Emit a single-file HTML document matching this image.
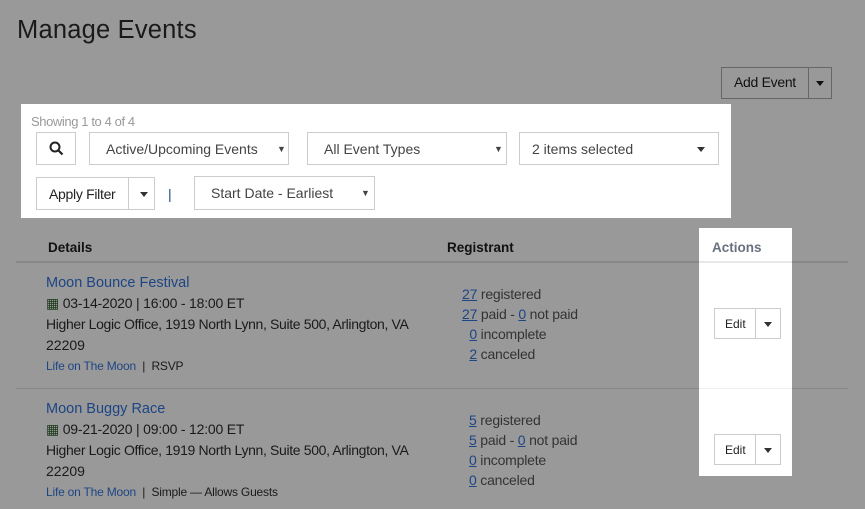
<!DOCTYPE html>
<html><head><style>
*{margin:0;padding:0;box-sizing:border-box}
body{width:865px;height:509px;background:#999;font-family:"Liberation Sans",sans-serif;position:relative;overflow:hidden;color:#1a1a1a}
.a{position:absolute;white-space:nowrap}
.w{background:#fff;position:absolute}
.box{position:absolute;border:1px solid #ccc;background:#fff;font-size:14px;color:#444}
.lnk{color:#1d4585}
.u{text-decoration:underline;color:#1d4585}
.tri{position:absolute;width:0;height:0;border-left:4px solid transparent;border-right:4px solid transparent;border-top:5px solid #333}
.sm{position:absolute;font-size:9px;top:11px}
</style></head><body>
<div class="a" style="left:17px;top:16px;font-size:25.5px;color:#1a1a1a;letter-spacing:0.2px">Manage Events</div>
<div class="a" style="left:721px;top:67px;width:111px;height:32px;border:1px solid #666;"></div>
<div class="a" style="left:734px;top:74px;font-size:14px;color:#111;letter-spacing:-0.3px">Add Event</div>
<div class="a" style="left:808px;top:67px;width:1px;height:32px;background:#666"></div>
<span class="tri" style="left:816px;top:81px;border-top-color:#111"></span>

<div class="w" style="left:21px;top:104px;width:710px;height:114px"></div>
<div class="a" style="left:31px;top:114px;font-size:13px;color:#999;letter-spacing:-0.4px">Showing 1 to 4 of 4</div>
<div class="box" style="left:36px;top:132px;width:40px;height:33px"><svg style="position:absolute;left:12px;top:8px" width="15" height="15" viewBox="0 0 15 15"><circle cx="6" cy="6" r="4.5" fill="none" stroke="#222" stroke-width="2"/><path d="M9.5 9.5L13.5 13.5" stroke="#222" stroke-width="2.2"/></svg></div>
<div class="box" style="left:89px;top:132px;width:200px;height:33px"><span class="a" style="left:16px;top:8px">Active/Upcoming Events</span><span class="sm" style="left:187px">▼</span></div>
<div class="box" style="left:307px;top:132px;width:200px;height:33px"><span class="a" style="left:16px;top:8px">All Event Types</span><span class="sm" style="left:186px">▼</span></div>
<div class="box" style="left:519px;top:132px;width:200px;height:33px"><span class="a" style="left:12px;top:8px">2 items selected</span><span class="tri" style="left:177px;top:14px"></span></div>
<div class="box" style="left:36px;top:177px;width:119px;height:33px"><span class="a" style="left:12px;top:8px;color:#222;letter-spacing:-0.3px">Apply Filter</span><span class="a" style="left:91px;top:-1px;width:1px;height:33px;background:#ccc"></span><span class="tri" style="left:103px;top:14px"></span></div>
<div class="a" style="left:168px;top:186px;font-size:14px;color:#1d4585">|</div>
<div class="box" style="left:194px;top:176px;width:181px;height:34px"><span class="a" style="left:16px;top:8px">Start Date - Earliest</span><span class="sm" style="left:166px">▼</span></div>

<div class="w" style="left:699px;top:228px;width:93px;height:248px"></div>
<div class="a" style="left:48px;top:240px;font-size:13.5px;font-weight:bold;color:#111">Details</div>
<div class="a" style="left:447px;top:240px;font-size:13.5px;font-weight:bold;color:#111">Registrant</div>
<div class="a" style="left:712px;top:240px;font-size:13.5px;font-weight:bold;color:#6a7080">Actions</div>
<div class="a" style="left:16px;top:261px;width:832px;height:2px;background:#888"></div>
<div class="a" style="left:699px;top:261px;width:93px;height:2px;background:#e8e8e8"></div>
<div class="a" style="left:16px;top:388px;width:832px;height:1px;background:#888"></div>
<div class="a" style="left:699px;top:388px;width:93px;height:1px;background:#eee"></div>

<div class="a" style="left:46px;top:275px;font-size:14.5px"><span class="lnk">Moon Bounce Festival</span></div>
<div class="a" style="left:46px;top:295px;font-size:14px;letter-spacing:-0.2px"><span style="color:#1b3a1b">▦</span> 03-14-2020 | 16:00 - 18:00 ET</div>
<div class="a" style="left:46px;top:316px;font-size:14px;letter-spacing:-0.35px">Higher Logic Office, 1919 North Lynn, Suite 500, Arlington, VA</div>
<div class="a" style="left:46px;top:337px;font-size:14px">22209</div>
<div class="a" style="left:46px;top:359px;font-size:12px;letter-spacing:-0.2px"><span class="lnk">Life on The Moon</span> &nbsp;| &nbsp;RSVP</div>

<div class="a" style="left:46px;top:401px;font-size:14.5px"><span class="lnk">Moon Buggy Race</span></div>
<div class="a" style="left:46px;top:421px;font-size:14px;letter-spacing:-0.2px"><span style="color:#1b3a1b">▦</span> 09-21-2020 | 09:00 - 12:00 ET</div>
<div class="a" style="left:46px;top:442px;font-size:14px;letter-spacing:-0.35px">Higher Logic Office, 1919 North Lynn, Suite 500, Arlington, VA</div>
<div class="a" style="left:46px;top:463px;font-size:14px">22209</div>
<div class="a" style="left:46px;top:485px;font-size:12px;letter-spacing:-0.2px"><span class="lnk">Life on The Moon</span> &nbsp;| &nbsp;Simple — Allows Guests</div>

<div class="a" style="left:462px;top:284px;font-size:14px;line-height:20px;color:#333;letter-spacing:-0.2px"><span class="u">27</span> registered<br><span class="u">27</span> paid - <span class="u">0</span> not paid<br>&nbsp;&nbsp;<span class="u">0</span> incomplete<br>&nbsp;&nbsp;<span class="u">2</span> canceled</div>
<div class="a" style="left:469px;top:410px;font-size:14px;line-height:20px;color:#333;letter-spacing:-0.2px"><span class="u">5</span> registered<br><span class="u">5</span> paid - <span class="u">0</span> not paid<br><span class="u">0</span> incomplete<br><span class="u">0</span> canceled</div>

<div class="box" style="left:714px;top:308px;width:67px;height:31px"><span class="a" style="left:10px;top:8px;font-size:12px;color:#222">Edit</span><span class="a" style="left:40px;top:0;width:1px;height:29px;background:#ccc"></span><span class="tri" style="left:49px;top:13px"></span></div>
<div class="box" style="left:714px;top:434px;width:67px;height:31px"><span class="a" style="left:10px;top:8px;font-size:12px;color:#222">Edit</span><span class="a" style="left:40px;top:0;width:1px;height:29px;background:#ccc"></span><span class="tri" style="left:49px;top:13px"></span></div>
</body></html>
